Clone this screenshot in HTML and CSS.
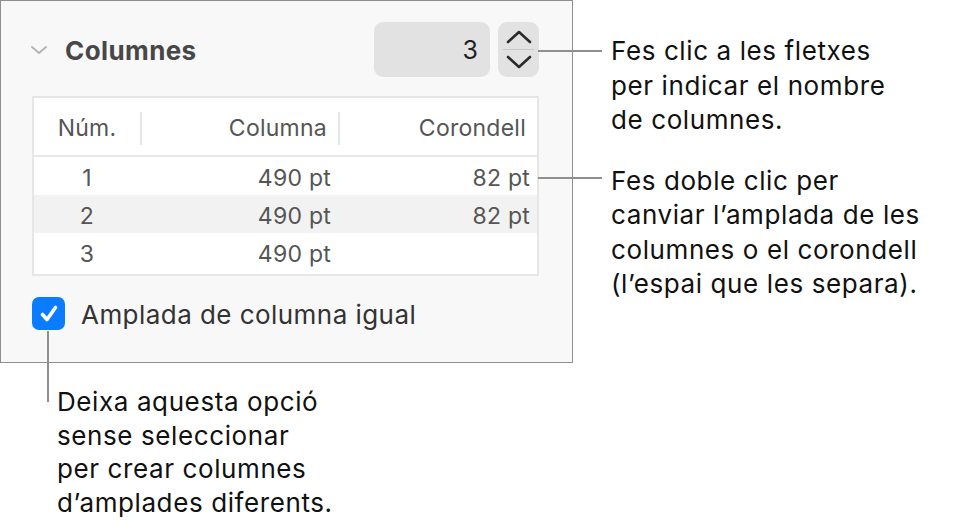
FILE: index.html
```html
<!DOCTYPE html>
<html lang="ca">
<head>
    <meta charset="UTF-8">
    <meta name="viewport" content="width=device-width, initial-scale=1.0">
    <title>Columnes</title>
    <link rel="stylesheet" href="styles.css">
</head>
<body>

    <div class="page">
        <section class="panel">
            <div class="panel-head">
                <svg class="disclosure" width="18" height="10" viewBox="0 0 18 10">
                    <path d="M2 2 L9 8 L16 2" fill="none" stroke="#b4b4b4" stroke-width="2" stroke-linecap="round" stroke-linejoin="round"/>
                </svg>
                <h2>Columnes</h2>
                <div class="count">3</div>
                <div class="stepper">
                    <svg width="26" height="14" viewBox="0 0 26 14">
                        <path d="M2 12 L13 2 L24 12" fill="none" stroke="#2b2b2b" stroke-width="2.6" stroke-linecap="round" stroke-linejoin="round"/>
                    </svg>
                    <span class="stepper-line"></span>
                    <svg width="26" height="14" viewBox="0 0 26 14">
                        <path d="M2 2 L13 12 L24 2" fill="none" stroke="#2b2b2b" stroke-width="2.6" stroke-linecap="round" stroke-linejoin="round"/>
                    </svg>
                </div>
            </div>

            <div class="cols">
                <div class="cols-row cols-head">
                    <div class="cell">Núm.</div>
                    <div class="cell">Columna</div>
                    <div class="cell">Corondell</div>
                </div>
                <div class="cols-row">
                    <div class="cell">1</div>
                    <div class="cell">490 pt</div>
                    <div class="cell">82 pt</div>
                </div>
                <div class="cols-row striped">
                    <div class="cell">2</div>
                    <div class="cell">490 pt</div>
                    <div class="cell">82 pt</div>
                </div>
                <div class="cols-row">
                    <div class="cell">3</div>
                    <div class="cell">490 pt</div>
                    <div class="cell"></div>
                </div>
            </div>

            <div class="equal">
                <span class="check">
                    <svg width="22" height="22" viewBox="0 0 22 22">
                        <path d="M4.5 11.5 L9 16.5 L17.5 4.5" fill="none" stroke="#fff" stroke-width="3.6" stroke-linecap="round" stroke-linejoin="round"/>
                    </svg>
                </span>
                <span>Amplada de columna igual</span>
            </div>
        </section>

        <div class="notes">
            <p class="note note-arrows">Fes clic a les fletxes<br>per indicar el nombre<br>de columnes.</p>
            <p class="note note-width">Fes doble clic per<br>canviar l’amplada de les<br>columnes o el corondell<br>(l’espai que les separa).</p>
        </div>

        <p class="note-bottom">Deixa aquesta opció<br>sense seleccionar<br>per crear columnes<br>d’amplades diferents.</p>
    </div>

</body>
</html>
```

FILE: styles.css
```css
/* Pàgina */
body {
    margin: 0;
    background-color: #fff;
    font-family: Inter, "Noto Sans", sans-serif;
    color: #111;
}
.page {
    display: grid;
    grid-template-columns: 573px 1fr;
    grid-template-rows: auto auto;
}

/* Panell de columnes */
.panel {
    box-sizing: border-box;
    height: 363px;
    padding: 21px 33px 0 31px;
    background-color: #f8f8f8;
    border: 1px solid #8e8e8e;
}
.panel-head {
    display: flex;
    align-items: center;
    height: 55px;
}
.disclosure {
    margin-left: -2px;
}
.panel-head h2 {
    margin: 0 0 0 17px;
    padding-top: 2px;
    font-size: 26px;
    font-weight: 700;
    letter-spacing: 0.4px;
    color: #474747;
}
.count {
    box-sizing: border-box;
    margin-left: auto;
    width: 116px;
    height: 55px;
    padding: 1px 12px 0 0;
    border-radius: 9px;
    background-color: #e2e2e2;
    font-size: 25px;
    line-height: 55px;
    text-align: right;
    color: #222;
}
.stepper {
    box-sizing: border-box;
    width: 41px;
    height: 55px;
    margin-left: 8px;
    border-radius: 9px;
    background-color: #e2e2e2;
    display: flex;
    flex-direction: column;
    align-items: center;
    justify-content: center;
    gap: 5px;
}
.stepper-line {
    width: 31px;
    height: 1px;
    background-color: #c8c8c8;
}

/* Taula */
.cols {
    margin-top: 19px;
    border: 2px solid #e6e6e6;
    background-color: #fff;
    padding-bottom: 3px;
    font-size: 23px;
    letter-spacing: 0.25px;
    color: #555;
}
.cols-row {
    box-sizing: border-box;
    display: grid;
    grid-template-columns: 106px 198px 1fr;
    align-items: center;
    height: 38px;
    padding-top: 3px;
}
.cols-row .cell {
    text-align: right;
    padding-right: 7px;
}
.cols-row .cell:first-child {
    text-align: center;
    padding-right: 0;
}
.cols-head {
    height: 59px;
    border-bottom: 2px solid #e9e9e9;
    padding-top: 4px;
}
.cols-head .cell {
    padding-right: 11px;
    line-height: 33px;
}
.cols-head .cell + .cell {
    border-left: 2px solid #e6e6e6;
}
.striped {
    background-color: #f2f2f2;
}

/* Casella */
.equal {
    display: flex;
    align-items: center;
    gap: 16px;
    margin-top: 21px;
    font-size: 26px;
    letter-spacing: 0.45px;
    color: #333;
}
.equal span:last-child {
    padding-top: 2px;
}
.check {
    width: 33px;
    height: 33px;
    border-radius: 7px;
    background-color: #0a7cff;
    display: flex;
    align-items: center;
    justify-content: center;
}

/* Notes */
.notes {
    padding-left: 38px;
    padding-top: 34px;
}
.note, .note-bottom {
    position: relative;
    margin: 0;
    font-size: 26px;
    letter-spacing: 0.6px;
    line-height: 34.5px;
}
.note-width {
    margin-top: 26px;
}
.note::before {
    content: "";
    position: absolute;
    left: -73px;
    width: 64px;
    height: 2px;
    background-color: #8f8f8f;
}
.note-arrows::before {
    top: 16px;
}
.note-width::before {
    top: 13px;
}
.note-bottom {
    grid-column: 1 / 3;
    margin-top: 22px;
    padding-left: 57px;
    line-height: 33.5px;
}
.note-bottom::before {
    content: "";
    position: absolute;
    left: 47px;
    top: -54px;
    width: 2px;
    height: 71px;
    background-color: #8f8f8f;
}
```
